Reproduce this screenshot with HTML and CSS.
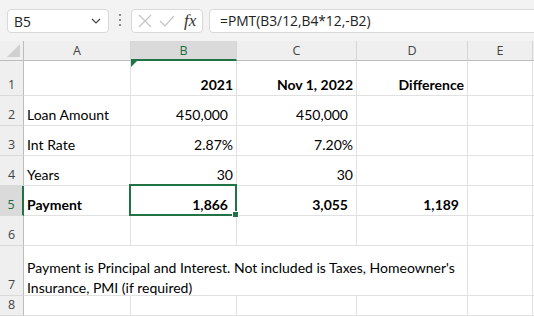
FILE: index.html
```html
<!DOCTYPE html>
<html lang="en">
<head>
    <meta charset="UTF-8">
    <title>Loan Payment</title>
    <link rel="stylesheet" href="styles.css">
</head>
<body>
    <div class="toolbar">
        <div class="name-box">
            <span>B5</span>
            <svg class="chevron" width="10" height="6" viewBox="0 0 10 6"><path d="M1 1 L5 5 L9 1" fill="none" stroke="#444" stroke-width="1.2"/></svg>
        </div>
        <div class="grip"><i></i><i></i><i></i></div>
        <div class="fx-box">
            <svg width="14" height="14" viewBox="0 0 14 14"><path d="M1 1 L13 13 M13 1 L1 13" stroke="#c4c4c4" stroke-width="1.2"/></svg>
            <svg width="16" height="14" viewBox="0 0 16 14"><path d="M1 7 L6 12 L15 2" fill="none" stroke="#c4c4c4" stroke-width="1.2"/></svg>
            <span class="fx">fx</span>
        </div>
        <div class="formula">=PMT(B3/12,B4*12,-B2)</div>
    </div>

    <div class="sheet">
        <div class="h corner"><span class="tri"></span></div>
        <div class="h col">A</div>
        <div class="h col sel-col">B</div>
        <div class="h col">C</div>
        <div class="h col">D</div>
        <div class="h col">E</div>
        <div class="h col"></div>

        <div class="h row">1</div>
        <div class="c"></div>
        <div class="c num b err">2021</div>
        <div class="c num b">Nov 1, 2022</div>
        <div class="c num b">Difference</div>
        <div class="c"></div>
        <div class="c"></div>

        <div class="h row">2</div>
        <div class="c">Loan Amount</div>
        <div class="c num acc">450,000</div>
        <div class="c num acc">450,000</div>
        <div class="c"></div>
        <div class="c"></div>
        <div class="c"></div>

        <div class="h row">3</div>
        <div class="c">Int Rate</div>
        <div class="c num">2.87%</div>
        <div class="c num">7.20%</div>
        <div class="c"></div>
        <div class="c"></div>
        <div class="c"></div>

        <div class="h row">4</div>
        <div class="c">Years</div>
        <div class="c num">30</div>
        <div class="c num">30</div>
        <div class="c"></div>
        <div class="c"></div>
        <div class="c"></div>

        <div class="h row sel-row">5</div>
        <div class="c b">Payment</div>
        <div class="c num acc b">1,866</div>
        <div class="c num acc b">3,055</div>
        <div class="c num acc b">1,189</div>
        <div class="c"></div>
        <div class="c"></div>

        <div class="h row">6</div>
        <div class="c"></div>
        <div class="c"></div>
        <div class="c"></div>
        <div class="c"></div>
        <div class="c"></div>
        <div class="c"></div>

        <div class="h row">7</div>
        <div class="c wrap">Payment is Principal and Interest. Not included is Taxes, Homeowner's<br>Insurance, PMI (if required)</div>
        <div class="c"></div>
        <div class="c"></div>

        <div class="h row">8</div>
        <div class="c"></div>
        <div class="c"></div>
        <div class="c"></div>
        <div class="c"></div>
        <div class="c"></div>
        <div class="c"></div>

        <div class="selection"><span class="handle"></span></div>
    </div>
</body>
</html>
```

FILE: styles.css
```css
body {
    margin: 0;
    width: 534px;
    height: 316px;
    overflow: hidden;
    background: #fff;
    font-family: 'Lato', sans-serif;
    color: #000;
}
.toolbar {
    display: flex;
    align-items: flex-start;
    height: 41px;
    padding: 9px 0 0 7px;
    box-sizing: border-box;
    background: #f3f3f3;
    font-family: 'Open Sans', sans-serif;
    font-size: 13.8px;
    color: #222;
}
.name-box {
    width: 102px;
    height: 24px;
    box-sizing: border-box;
    display: flex;
    align-items: center;
    justify-content: space-between;
    padding: 0 7px 0 6px;
    background: #fff;
    border: 1px solid #d9d9d9;
    border-radius: 4px;
}
.grip {
    width: 22px;
    display: flex;
    flex-direction: column;
    align-items: center;
    gap: 3px;
    padding-top: 5px;
}
.grip i {
    width: 2px;
    height: 2px;
    background: #8a8a8a;
}
.fx-box {
    width: 72px;
    height: 24px;
    box-sizing: border-box;
    display: flex;
    align-items: center;
    gap: 7px;
    padding-left: 6px;
    background: #fff;
    border: 1px solid #d9d9d9;
    border-radius: 4px;
}
.fx {
    font-family: 'Liberation Serif', serif;
    font-style: italic;
    font-size: 17px;
    color: #333;
    margin-left: 2px;
}
.formula {
    flex: 1;
    height: 24px;
    box-sizing: border-box;
    margin-left: 6px;
    margin-right: -8px;
    padding: 1px 0 0 10px;
    line-height: 20px;
    background: #fff;
    border: 1px solid #d9d9d9;
    border-radius: 4px;
}
.sheet {
    position: relative;
    display: grid;
    grid-template-columns: 24px 107px 106px 120px 111px 65px 1fr;
    grid-template-rows: 20px 35px 30px 30px 30px 30px 30px 50px 20px;
    font-size: 14px;
}
.h {
    background: #efefef;
    border-right: 1px solid #d5d5d5;
    border-bottom: 1px solid #bdbdbd;
    font-family: 'Open Sans', sans-serif;
    font-size: 12.5px;
    color: #444;
    display: flex;
    justify-content: center;
}
.col {
    align-items: center;
}
.row {
    align-items: flex-end;
    border-right-color: #bdbdbd;
    border-bottom-color: #dadada;
    padding-bottom: 2px;
}
.corner {
    position: relative;
    border-right-color: #bdbdbd;
}
.tri {
    position: absolute;
    left: 7px;
    top: 3px;
    width: 0;
    height: 0;
    border-left: 13px solid transparent;
    border-bottom: 13px solid #d0d0d0;
}
.sel-col {
    background: #dadada;
    color: #1d6b40;
    border-bottom: 2px solid #217346;
}
.sel-row {
    background: #dadada;
    color: #1d6b40;
    border-right: 2px solid #217346;
}
.c {
    border-right: 1px solid #e1e1e1;
    border-bottom: 1px solid #e1e1e1;
    display: flex;
    align-items: flex-end;
    padding: 0 3px 2px;
    white-space: nowrap;
    position: relative;
}
.num {
    justify-content: flex-end;
}
.acc {
    padding-right: 8px;
}
.b {
    font-weight: bold;
}
.err::before {
    content: '';
    position: absolute;
    left: 0;
    top: 0;
    border-top: 6px solid #217346;
    border-right: 6px solid transparent;
}
.wrap {
    grid-column: 2 / span 4;
    display: block;
    align-self: stretch;
    padding-top: 12px;
    line-height: 20px;
}
.selection {
    position: absolute;
    left: 129px;
    top: 143px;
    width: 108px;
    height: 32px;
    box-sizing: border-box;
    border: 2px solid #217346;
}
.handle {
    position: absolute;
    right: -4px;
    bottom: -4px;
    width: 5px;
    height: 5px;
    background: #217346;
    border: 1px solid #fff;
}
```
